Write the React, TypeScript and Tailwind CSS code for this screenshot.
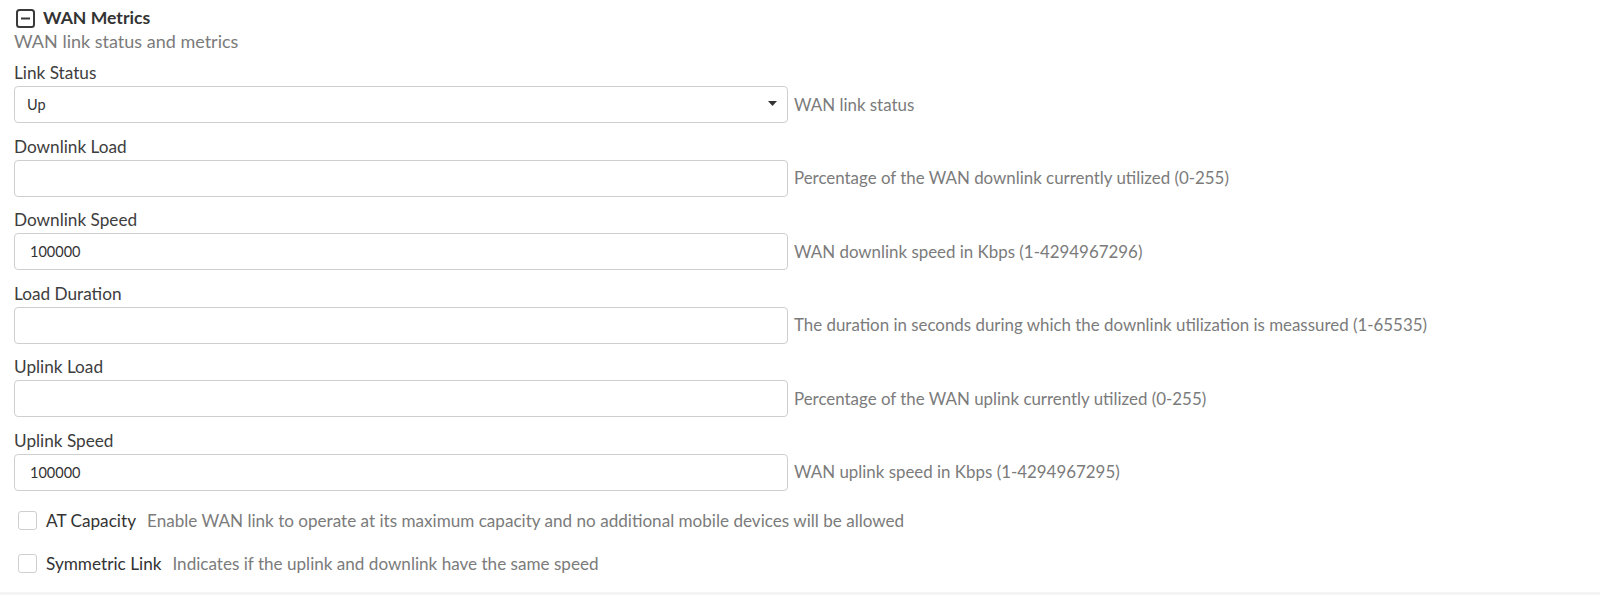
import { useState } from "react";

const fields = [
  { label: "Downlink Load", value: "", help: "Percentage of the WAN downlink currently utilized (0-255)" },
  { label: "Downlink Speed", value: "100000", help: "WAN downlink speed in Kbps (1-4294967296)" },
  { label: "Load Duration", value: "", help: "The duration in seconds during which the downlink utilization is meassured (1-65535)" },
  { label: "Uplink Load", value: "", help: "Percentage of the WAN uplink currently utilized (0-255)" },
  { label: "Uplink Speed", value: "100000", help: "WAN uplink speed in Kbps (1-4294967295)" },
];

const checks = [
  { label: "AT Capacity", help: "Enable WAN link to operate at its maximum capacity and no additional mobile devices will be allowed" },
  { label: "Symmetric Link", help: "Indicates if the uplink and downlink have the same speed" },
];

function CollapseIcon() {
  return (
    <svg width="19" height="19" viewBox="0 0 19 19" fill="none">
      <rect x="1" y="1" width="17" height="17" rx="2.5" stroke="#3a3a3a" strokeWidth="2" />
      <line x1="5" y1="9.5" x2="14" y2="9.5" stroke="#3a3a3a" strokeWidth="2" />
    </svg>
  );
}

function Field({ label, value, help }: { label: string; value: string; help: string }) {
  const [v, setV] = useState(value);
  return (
    <div className="mb-[12.5px]">
      <div className="text-[17.2px] leading-[22px] text-[#3d3d3d] mb-[2px]">{label}</div>
      <div className="flex items-center gap-[6px]">
        <input
          value={v}
          onChange={(e) => setV(e.target.value)}
          className="w-[774px] h-[37px] rounded-[4px] border border-[#cfcfcf] bg-white px-[15px] text-[14.5px] text-[#333] outline-none"
        />
        <span className="text-[16.9px] text-[#7b7b7b]">{help}</span>
      </div>
    </div>
  );
}

export default function App() {
  return (
    <div className="min-h-screen bg-white flex flex-col font-['Lato',sans-serif]">
      <div className="flex-1 px-[14px] pt-[6px]">
        <div className="flex items-center gap-[8px] h-[24px] pl-[2px]">
          <CollapseIcon />
          <span className="text-[17.6px] font-bold text-[#333]">WAN Metrics</span>
        </div>
        <div className="text-[18px] leading-[22px] text-[#7b7b7b] mb-[10px]">WAN link status and metrics</div>

        <div className="mb-[12.5px]">
          <div className="text-[17.2px] leading-[22px] text-[#3d3d3d] mb-[2px]">Link Status</div>
          <div className="flex items-center gap-[6px]">
            <div className="relative w-[774px] h-[37px] rounded-[4px] border border-[#cfcfcf] bg-white flex items-center pl-[12px] text-[14.5px] text-[#333]">
              Up
              <svg className="absolute right-[10px] top-[14px]" width="9" height="6" viewBox="0 0 9 6">
                <path d="M0 0 L9 0 L4.5 5 Z" fill="#333" />
              </svg>
            </div>
            <span className="text-[16.9px] text-[#7b7b7b]">WAN link status</span>
          </div>
        </div>

        {fields.map((f) => (
          <Field key={f.label} {...f} />
        ))}

        <div className="flex flex-col gap-[24px] pt-[8px] pl-[4px]">
          {checks.map((c) => (
            <label key={c.label} className="flex items-center h-[19px]">
              <span className="w-[19px] h-[19px] rounded-[3px] border border-[#cfcfcf] bg-white" />
              <span className="ml-[9px] text-[17.2px] text-[#333]">{c.label}</span>
              <span className="ml-[11px] text-[17.1px] text-[#7b7b7b]">{c.help}</span>
            </label>
          ))}
        </div>
      </div>
      <div className="h-[3px] bg-[#f4f4f4]" />
    </div>
  );
}
